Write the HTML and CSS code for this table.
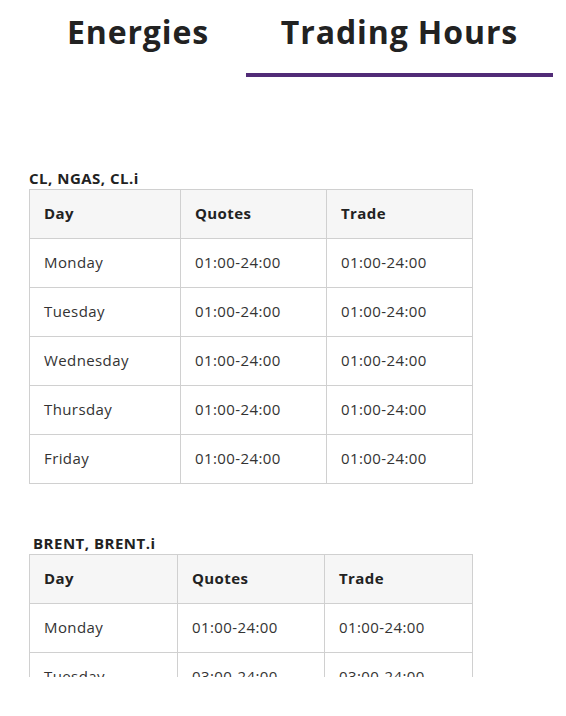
FILE: index.html
```html
<!DOCTYPE html>
<html>
<head>
<meta charset="utf-8">
<link rel="stylesheet" href="styles.css">
</head>
<body>
<div class="page">
  <nav class="tabs">
    <div class="tab tab-energies">Energies</div>
    <div class="tab tab-hours active">Trading Hours</div>
  </nav>

  <section class="block block-first">
    <h3 class="title">CL, NGAS, CL.i</h3>
    <table class="hours hours-a">
      <thead>
        <tr><th>Day</th><th>Quotes</th><th>Trade</th></tr>
      </thead>
      <tbody>
        <tr><td>Monday</td><td>01:00-24:00</td><td>01:00-24:00</td></tr>
        <tr><td>Tuesday</td><td>01:00-24:00</td><td>01:00-24:00</td></tr>
        <tr><td>Wednesday</td><td>01:00-24:00</td><td>01:00-24:00</td></tr>
        <tr><td>Thursday</td><td>01:00-24:00</td><td>01:00-24:00</td></tr>
        <tr><td>Friday</td><td>01:00-24:00</td><td>01:00-24:00</td></tr>
      </tbody>
    </table>
  </section>

  <section class="block block-second">
    <h3 class="title title-indent">BRENT, BRENT.i</h3>
    <table class="hours hours-b">
      <thead>
        <tr><th>Day</th><th>Quotes</th><th>Trade</th></tr>
      </thead>
      <tbody>
        <tr><td>Monday</td><td>01:00-24:00</td><td>01:00-24:00</td></tr>
        <tr><td>Tuesday</td><td>03:00-24:00</td><td>03:00-24:00</td></tr>
        <tr><td>Wednesday</td><td>01:00-24:00</td><td>01:00-24:00</td></tr>
      </tbody>
    </table>
  </section>
</div>
</body>
</html>
```
FILE: styles.css
```css
* { box-sizing: border-box; }
html, body { margin: 0; padding: 0; background: #fff; }
body {
  font-family: "Open Sans", "Liberation Sans", sans-serif;
  color: #222;
}
.page {
  width: 566px;
  height: 677px;
  overflow: hidden;
}
.tabs {
  display: flex;
  padding-left: 30px;
  padding-top: 8px;
}
.tab {
  font-size: 32px;
  font-weight: 700;
  line-height: 44px;
  letter-spacing: 0.9px;
  text-align: center;
  color: #222;
  height: 69px;
  padding-top: 2px;
  border-bottom: 4px solid transparent;
}
.tab-energies { width: 216px; }
.tab-hours { width: 307px; }
.tab.active { border-bottom-color: #512b77; }

.block { padding-left: 29px; }
.block-first { margin-top: 91px; }
.block-second { margin-top: 49px; }
.title {
  margin: 0;
  font-size: 15px;
  font-weight: 700;
  line-height: 20px;
  height: 21px;
  letter-spacing: 0.5px;
  color: #222;
}
.title-indent { padding-left: 4px; }
.hours {
  border-collapse: collapse;
  width: 444px;
  font-size: 15px;
  letter-spacing: 0.4px;
}
.hours th, .hours td {
  border: 1px solid #d0d0d0;
  height: 49px;
  padding: 0 14px 2px;
  text-align: left;
  vertical-align: middle;
}
.hours th {
  background: #f6f6f6;
  font-weight: 700;
  color: #222;
}
.hours td {
  font-weight: 400;
  color: #333;
}
.hours-a th:nth-child(1) { width: 151px; }
.hours-a th:nth-child(2) { width: 146px; }
.hours-b th:nth-child(1) { width: 148px; }
.hours-b th:nth-child(2) { width: 147px; }
```
